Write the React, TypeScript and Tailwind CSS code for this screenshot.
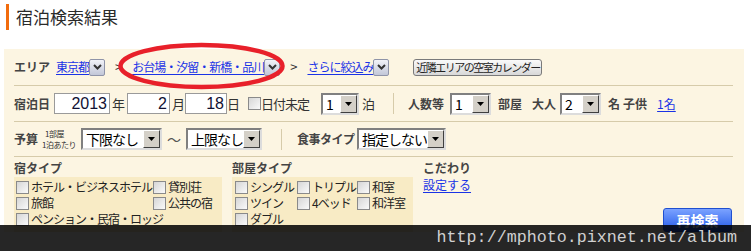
import React from 'react';

const linkCls = 'text-[#1a33e6] underline underline-offset-[2px]';

function DropBtn() {
  return (
    <span className="inline-flex h-[17px] w-[16px] items-center justify-center rounded-[2px] border border-[#8f94a8] bg-linear-to-b from-[#f2f3f8] to-[#c2c7d8]">
      <svg width="9" height="6" viewBox="0 0 9 6">
        <path d="M1 1l3.5 3.5L8 1" stroke="#333" strokeWidth="2" fill="none" />
      </svg>
    </span>
  );
}

function LinkSelect({ text, className }: { text: string; className?: string }) {
  return (
    <span className={`inline-flex items-center ${className ?? ''}`}>
      <a className={`${linkCls} whitespace-nowrap text-[12px] tracking-[-1px]`}>{text}</a>
      <DropBtn />
    </span>
  );
}

function Arrow() {
  return (
    <span className="ml-auto flex h-full w-[17px] shrink-0 items-center justify-center border border-t-white border-l-white border-b-[#404040] border-r-[#404040] bg-[#d4d0c8]">
      <svg width="7" height="4" viewBox="0 0 7 4">
        <path d="M0 0h7L3.5 4z" fill="#000" />
      </svg>
    </span>
  );
}

function Sel({ value, className }: { value: string; className: string }) {
  return (
    <div
      className={`flex h-[22px] items-center overflow-hidden border-2 border-t-[#808080] border-l-[#808080] border-b-[#dcdcdc] border-r-[#dcdcdc] bg-white ${className}`}
    >
      <span className="whitespace-nowrap pl-[3px] text-[14px] leading-none tracking-[-1px] text-black">{value}</span>
      <Arrow />
    </div>
  );
}

function NumInput({ value, className }: { value: string; className: string }) {
  return (
    <div
      className={`flex h-[21px] items-center justify-end border border-[#9a9a9a] bg-white pr-[2px] font-['Liberation_Sans',sans-serif] text-[16px] text-[#111133] ${className}`}
    >
      {value}
    </div>
  );
}

function Check() {
  return (
    <span className="inline-block h-[13px] w-[13px] shrink-0 border border-[#8a8a8a] bg-linear-to-br from-[#d6d6d6] to-[#fafafa]" />
  );
}

function CheckItem({ label }: { label: string }) {
  return (
    <div className="flex h-[16px] items-center gap-[2px] whitespace-nowrap text-[12px] leading-none tracking-[-1px] text-[#222]">
      <Check />
      <span>{label}</span>
    </div>
  );
}

export default function App() {
  return (
    <div className="relative h-[251px] w-[751px] overflow-hidden bg-white font-['Noto_Sans_CJK_JP','Noto_Sans',sans-serif] text-[#333]">
      {/* Title */}
      <div className="flex h-[49px] items-start pl-[6px] pt-[4px]">
        <div className="h-[26px] w-[3px] bg-[#f26c0d]" />
        <h1 className="ml-[7px] text-[17px] leading-[26px] text-[#2a2a2a]">宿泊検索結果</h1>
      </div>

      {/* Search panel */}
      <div className="ml-[4px] w-[740px] bg-[#fcf5e2] pl-[10px] pr-[11px]">
        {/* Area */}
        <div className="flex h-[37px] items-center border-b border-[#d6cbaa] text-[12px]">
          <span className="w-[42px] font-bold text-[#444]">エリア</span>
          <LinkSelect text="東京都" />
          <span className="ml-[10px] text-[13px] text-[#333]">&gt;</span>
          <LinkSelect text="お台場・汐留・新橋・品川" className="ml-[10px]" />
          <span className="ml-[10px] text-[13px] text-[#333]">&gt;</span>
          <LinkSelect text="さらに絞込み" className="ml-[10px]" />
          <button className="ml-[24px] h-[17px] w-[129px] whitespace-nowrap rounded-[3px] border border-[#7a7a7a] bg-linear-to-b from-[#fafafa] to-[#d8d8d8] text-[11px] leading-none tracking-[-1.5px] text-[#222]">
            近隣エリアの空室カレンダー
          </button>
        </div>

        {/* Date / people */}
        <div className="flex h-[36px] items-center border-b border-[#d6cbaa] text-[12px]">
          <span className="w-[40px] font-bold text-[#444]">宿泊日</span>
          <NumInput value="2013" className="w-[56px]" />
          <span className="ml-[2px] w-[15px] text-[13px]">年</span>
          <NumInput value="2" className="w-[43px]" />
          <span className="ml-[2px] w-[13px] text-[13px]">月</span>
          <NumInput value="18" className="w-[42px]" />
          <span className="w-[21px] text-[13px]">日</span>
          <Check />
          <span className="w-[60px] text-[13px] tracking-[-1px]">日付未定</span>
          <Sel value="1" className="w-[38px]" />
          <span className="ml-[3px] text-[13px]">泊</span>
          <div className="ml-[18px] h-[21px] w-px bg-[#d6cbaa]" />
          <span className="ml-[14px] font-bold text-[#444]">人数等</span>
          <Sel value="1" className="ml-[6px] w-[41px]" />
          <span className="ml-[7px] font-bold text-[#444]">部屋</span>
          <span className="ml-[10px] font-bold text-[#444]">大人</span>
          <Sel value="2" className="ml-[4px] w-[41px]" />
          <span className="ml-[7px] font-bold text-[#444]">名</span>
          <span className="ml-[3px] font-bold text-[#444]">子供</span>
          <a className={`ml-[10px] ${linkCls}`}>1名</a>
        </div>

        {/* Budget / meals */}
        <div className="flex h-[35px] items-center border-b border-[#d6cbaa] text-[12px]">
          <span className="w-[28px] font-bold text-[#444]">予算</span>
          <span className="flex w-[39px] flex-col text-[8px] leading-[11px] tracking-[-0.5px] text-[#333]">
            <span className="pl-[3px]">1部屋</span>
            <span>1泊あたり</span>
          </span>
          <Sel value="下限なし" className="w-[81px]" />
          <span className="mx-[5px] text-[14px] text-[#555]">～</span>
          <Sel value="上限なし" className="w-[76px]" />
          <div className="ml-[19px] h-[21px] w-px bg-[#d6cbaa]" />
          <span className="ml-[15px] w-[60px] whitespace-nowrap font-bold tracking-[-0.5px] text-[#444]">食事タイプ</span>
          <Sel value="指定しない" className="w-[89px]" />
        </div>

        {/* Types */}
        <div className="flex pt-[3px] text-[12px]">
          <div className="w-[218px]">
            <div className="h-[17px] font-bold leading-[15px] text-[#444]">宿タイプ</div>
            <div className="grid w-[208px] grid-cols-[137px_1fr] bg-[#f8ebc5] pb-[5px] pl-[2px] pt-[2px]">
              <CheckItem label="ホテル・ビジネスホテル" />
              <CheckItem label="貸別荘" />
              <CheckItem label="旅館" />
              <CheckItem label="公共の宿" />
              <div className="col-span-2">
                <CheckItem label="ペンション・民宿・ロッジ" />
              </div>
            </div>
          </div>
          <div className="w-[191px]">
            <div className="h-[17px] font-bold leading-[15px] text-[#444]">部屋タイプ</div>
            <div className="grid w-[181px] grid-cols-[62px_60px_1fr] bg-[#f8ebc5] pb-[5px] pl-[3px] pt-[2px]">
              <CheckItem label="シングル" />
              <CheckItem label="トリプル" />
              <CheckItem label="和室" />
              <CheckItem label="ツイン" />
              <CheckItem label="4ベッド" />
              <CheckItem label="和洋室" />
              <CheckItem label="ダブル" />
            </div>
          </div>
          <div className="flex flex-1 flex-col">
            <div className="h-[17px] font-bold leading-[15px] text-[#444]">こだわり</div>
            <a className={`${linkCls} leading-[16px]`}>設定する</a>
            <button className="mt-auto mr-px self-end h-[24px] w-[69px] rounded-[3px] border border-[#1f4fd0] bg-linear-to-b from-[#7ba2ff] to-[#2457e8] text-[14px] font-bold leading-none text-white">
              再検索
            </button>
          </div>
        </div>
      </div>

      {/* Red marker ellipse */}
      <svg className="pointer-events-none absolute left-0 top-0" width="751" height="251">
        <ellipse cx="201.5" cy="66" rx="81" ry="21" fill="none" stroke="#e8202a" strokeWidth="4.5" />
      </svg>

      {/* Watermark bar */}
      <div className="absolute bottom-0 left-0 flex h-[26px] w-full items-center justify-end bg-black/85 pr-[14px] font-['Liberation_Mono',monospace] text-[16.7px] text-[#d0d0d0]">
        http://mphoto.pixnet.net/album
      </div>
    </div>
  );
}
